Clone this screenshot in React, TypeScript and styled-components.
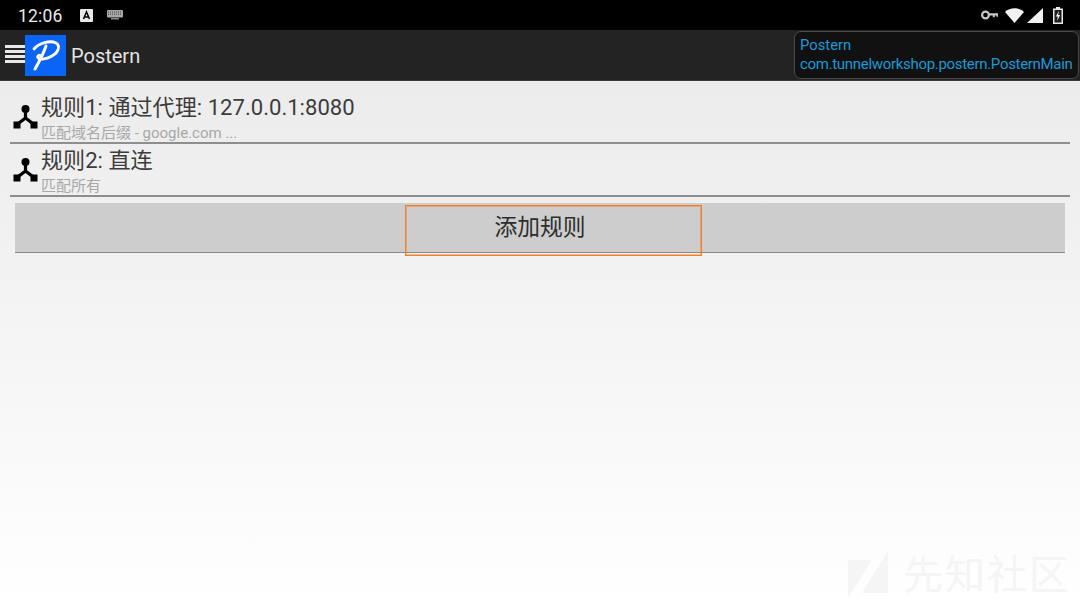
import React from 'react';
import styled, { createGlobalStyle } from 'styled-components';

const CJK = `Roboto, "Noto Sans CJK SC", sans-serif`;

const GlobalStyle = createGlobalStyle`
  html, body { margin: 0; padding: 0; width: 1080px; height: 607px; overflow: hidden; }
  body { font-family: ${CJK}; background: #fff; }
`;

const Screen = styled.div`
  position: relative;
  width: 1080px;
  height: 607px;
  display: flex;
  flex-direction: column;
  overflow: hidden;
`;

const StatusBar = styled.div`
  height: 30px;
  background: #000;
  display: flex;
  align-items: center;
  padding: 0 17px 0 18px;
  color: #e8e8e8;
  flex-shrink: 0;
`;

const Clock = styled.span`
  font-size: 17.5px;
  letter-spacing: 0.2px;
  width: 48px;
  padding-top: 2px;
`;

const StatusLeft = styled.div`
  display: flex;
  align-items: center;
  gap: 14px;
  flex: 1;
`;

const StatusRight = styled.div`
  display: flex;
  align-items: center;
  gap: 3px;
`;

const Toolbar = styled.div`
  height: 50px;
  background: #232323;
  border-bottom: 1px solid #3a3a3a;
  display: flex;
  align-items: center;
  padding-left: 5px;
  flex-shrink: 0;
`;

const Logo = styled.div`
  width: 41px;
  height: 41px;
  margin-top: 1px;
  background: #0a64f5;
  display: flex;
  align-items: center;
  justify-content: center;
`;

const AppTitle = styled.span`
  color: #e4e4e4;
  font-size: 20px;
  margin: 2px 0 0 5px;
`;

const Tooltip = styled.div`
  position: absolute;
  left: 794px;
  top: 31px;
  width: 285px;
  height: 48px;
  box-sizing: border-box;
  background: #111;
  border: 1px solid #4a4a4a;
  border-radius: 7px;
  padding: 3px 0 0 5px;
  color: #1d9ad6;
  font-size: 14.8px;
  line-height: 20px;
  white-space: nowrap;
`;

const ActivityName = styled.div`
  font-size: 15px;
  letter-spacing: -0.31px;
  margin-top: -1px;
`;

const Content = styled.div`
  flex: 1;
  background: linear-gradient(#ececec 0%, #f1f1f1 30%, #ffffff 100%);
  padding: 0 10px;
  display: flex;
  flex-direction: column;
`;

const RuleRow = styled.div<{ $height: number }>`
  height: ${({ $height }) => $height}px;
  box-sizing: border-box;
  border-bottom: 2px solid #8e8e8e;
  display: flex;
  align-items: flex-end;
  padding-left: 3px;
`;

const RuleIcon = styled.div`
  width: 28px;
  height: 52px;
  display: flex;
  align-items: center;
`;

const RuleText = styled.div`
  display: flex;
  flex-direction: column;
`;

const RuleTitle = styled.div`
  color: #3c3c3c;
  font-size: 22.1px;
  line-height: 30px;
  white-space: nowrap;
`;

const RuleSub = styled.div`
  color: #a8a8a8;
  font-size: 15px;
  line-height: 20px;
  margin-top: 1px;
  margin-bottom: -1px;
  white-space: nowrap;
`;

const AddButton = styled.div`
  position: relative;
  margin: 6px 5px 0;
  height: 50px;
  box-sizing: border-box;
  background: #cdcdcd;
  border-bottom: 1px solid #8a8a8a;
  display: flex;
  align-items: center;
  justify-content: center;
  color: #2e2e2e;
  font-size: 22.8px;
  padding-bottom: 5px;
`;

const FocusBox = styled.div`
  position: absolute;
  left: 390px;
  top: 2px;
  width: 297px;
  height: 51px;
  box-sizing: border-box;
  border: 1px solid #f57f25;
  box-shadow: inset 0 0 0 1px rgba(245, 127, 37, 0.5);
`;

const Watermark = styled.div`
  position: absolute;
  left: 848px;
  top: 551px;
  display: flex;
  align-items: center;
  gap: 15px;
  color: #f5f5f5;
  font-size: 40px;
  letter-spacing: 2px;
  line-height: 50px;
`;

const MenuIcon = () => (
  <svg width="20" height="20" viewBox="0 0 20 20">
    <path d="M0 1.5h20M0 6.5h20M0 11.5h20M0 16.5h20" stroke="#e8e8e8" strokeWidth="3" />
  </svg>
);

const PostemMark = () => (
  <svg width="41" height="41" viewBox="0 0 41 41" fill="none">
    <path
      d="M9 14 C14 8 25 5 31 8 C36 11 33 18 27 21 C22 24 15 25 13 23 C12 21 14 19 16 21"
      stroke="#fff"
      strokeWidth="2.8"
      strokeLinecap="round"
    />
    <path d="M21 11 C18 20 14 27 10 34" stroke="#fff" strokeWidth="3" strokeLinecap="round" />
  </svg>
);

const RuleGlyph = () => (
  <svg width="25" height="25" viewBox="0 0 25 25">
    <circle cx="12.5" cy="5" r="4" fill="#000" />
    <path d="M12.5 7v7L4 20.5M12.5 14L21 20.5" stroke="#000" strokeWidth="3.2" fill="none" />
    <rect x="0.5" y="17.5" width="7" height="7" fill="#000" />
    <rect x="17.5" y="17.5" width="7" height="7" fill="#000" />
  </svg>
);

const NotifA = () => (
  <svg width="13" height="13" viewBox="0 0 13 13">
    <rect width="13" height="13" rx="1" fill="#e8e8e8" />
    <path d="M3.5 10L6.5 3l3 7M4.6 8h3.8" stroke="#000" strokeWidth="1.5" fill="none" />
  </svg>
);

const KeyboardIcon = () => (
  <svg width="16" height="10" viewBox="0 0 16 10">
    <rect width="16" height="7.5" rx="1" fill="#a8a8a8" />
    <path d="M1 2h14M1 4.2h14" stroke="#000" strokeWidth="0.6" strokeDasharray="1 1" />
    <rect x="4" y="8" width="8" height="1.5" fill="#8c8c8c" />
  </svg>
);

const KeyIcon = () => (
  <svg width="17" height="10" viewBox="0 0 17 10" fill="none" style={{ marginRight: 4 }}>
    <circle cx="4.5" cy="5" r="3.4" stroke="#c8c8c8" strokeWidth="2.2" />
    <path d="M8 3.2h9v3.6h-1.6v-1.2h-1.6v1.6h-2v-1.6H8z" fill="#c8c8c8" />
  </svg>
);

const WifiIcon = () => (
  <svg width="19" height="15" viewBox="0 0 19 15">
    <path d="M0 4 C5 -1 14 -1 19 4 L9.5 15z" fill="#f2f2f2" />
  </svg>
);

const SignalIcon = () => (
  <svg width="16" height="15" viewBox="0 0 16 15">
    <path d="M16 0v15H0z" fill="#f2f2f2" />
  </svg>
);

const BatteryIcon = () => (
  <svg width="10" height="17" viewBox="0 0 10 17" style={{ marginLeft: 7 }}>
    <path d="M3 0h4v1.5h3V17H0V1.5h3z" fill="#e8e8e8" />
    <rect x="1.5" y="3" width="7" height="12.5" fill="#1c1c1c" />
    <path d="M6 3.8L2.8 9.5h2L4 14l3.2-6h-2z" fill="#f2f2f2" />
  </svg>
);

const WatermarkMark = () => (
  <svg width="40" height="50" viewBox="0 0 40 50">
    <path d="M0 9h24L0 47z" fill="#f5f5f5" />
    <path d="M40 0v42H14z" fill="#f5f5f5" />
  </svg>
);

const rules = [
  { title: '规则1: 通过代理: 127.0.0.1:8080', sub: '匹配域名后缀 - google.com ...', height: 63 },
  { title: '规则2: 直连', sub: '匹配所有', height: 53 },
];

const App: React.FC = () => (
  <Screen>
    <GlobalStyle />
    <StatusBar>
      <StatusLeft>
        <Clock>12:06</Clock>
        <NotifA />
        <KeyboardIcon />
      </StatusLeft>
      <StatusRight>
        <KeyIcon />
        <WifiIcon />
        <SignalIcon />
        <BatteryIcon />
      </StatusRight>
    </StatusBar>
    <Toolbar>
      <MenuIcon />
      <Logo>
        <PostemMark />
      </Logo>
      <AppTitle>Postern</AppTitle>
    </Toolbar>
    <Content>
      {rules.map((rule) => (
        <RuleRow key={rule.title} $height={rule.height}>
          <RuleIcon>
            <RuleGlyph />
          </RuleIcon>
          <RuleText>
            <RuleTitle>{rule.title}</RuleTitle>
            <RuleSub>{rule.sub}</RuleSub>
          </RuleText>
        </RuleRow>
      ))}
      <AddButton>
        添加规则
        <FocusBox />
      </AddButton>
    </Content>
    <Tooltip>
      Postern
      <ActivityName>com.tunnelworkshop.postern.PosternMain</ActivityName>
    </Tooltip>
    <Watermark>
      <WatermarkMark />
      先知社区
    </Watermark>
  </Screen>
);

export default App;
